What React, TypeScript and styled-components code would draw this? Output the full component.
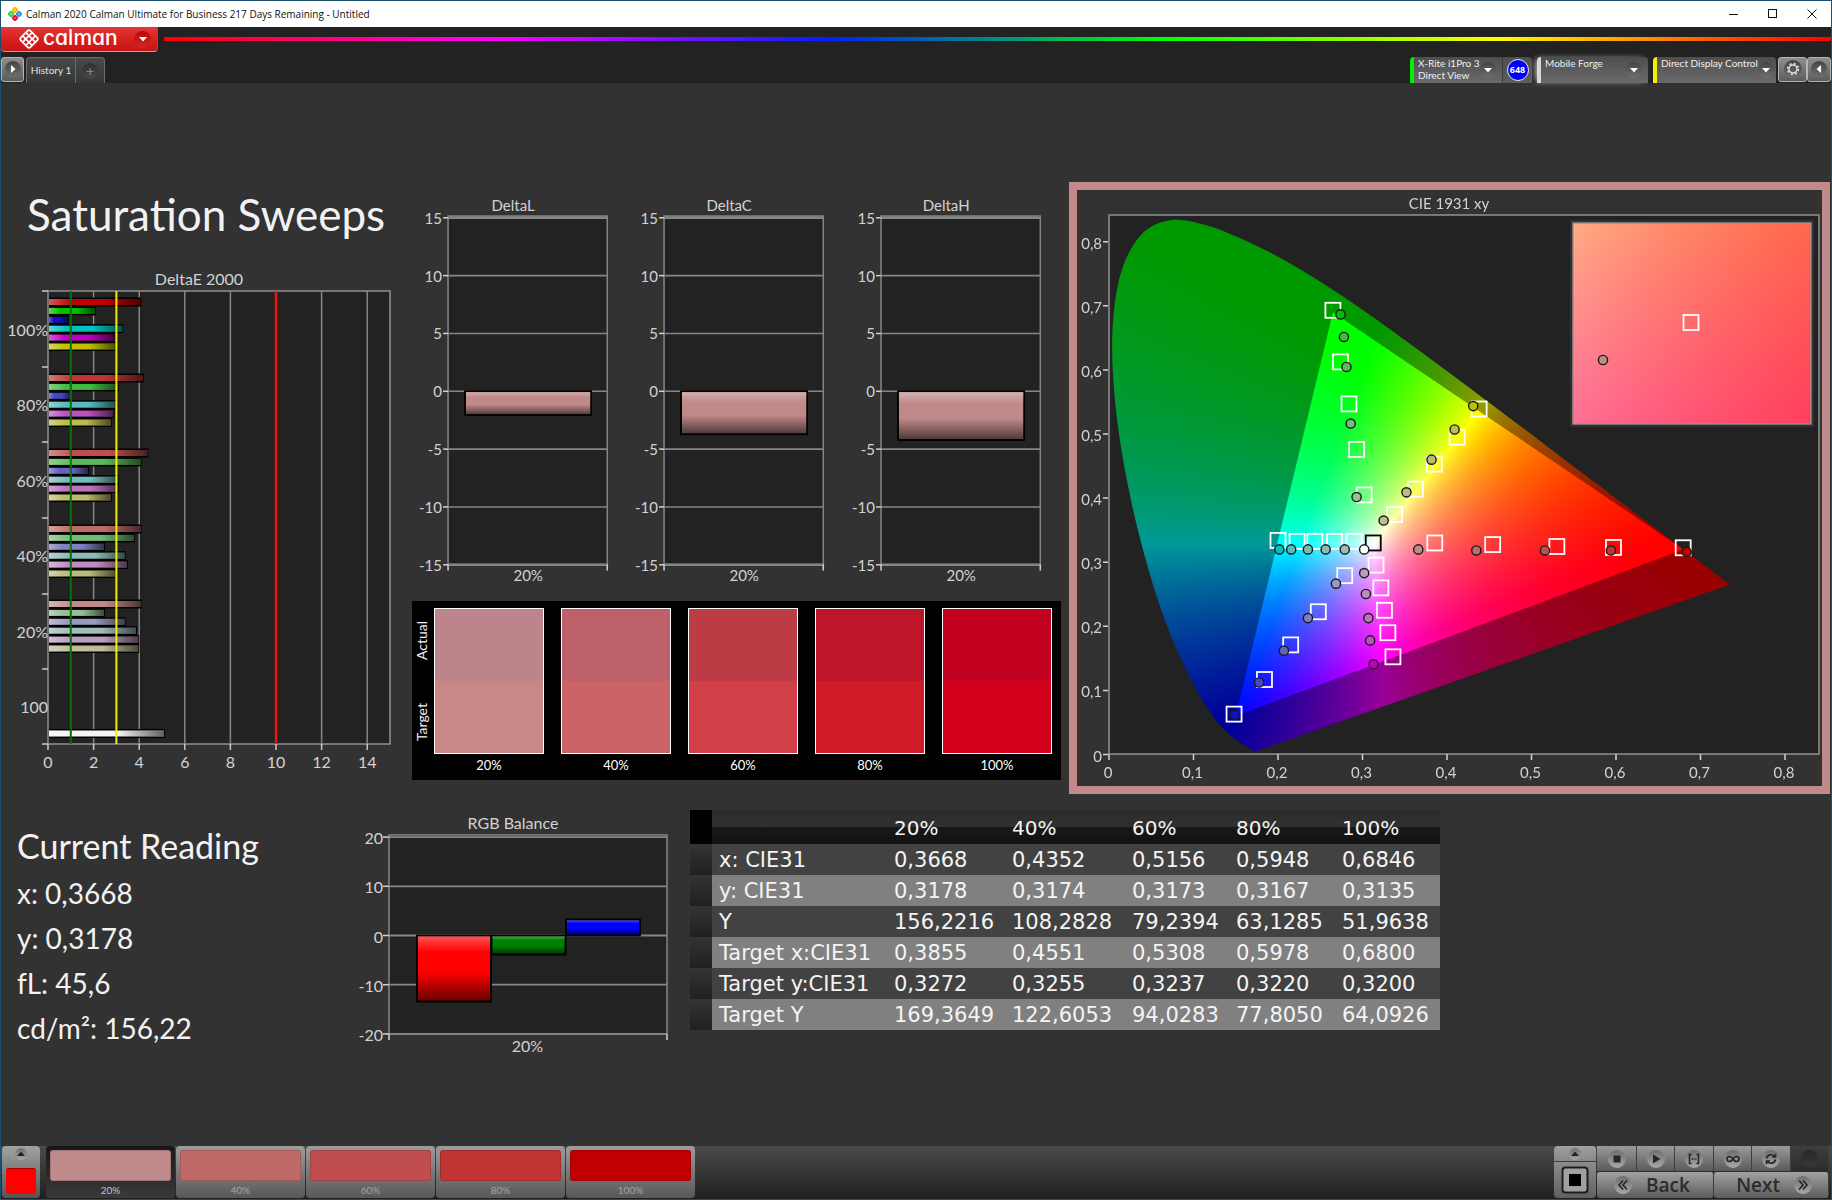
import React, { useEffect, useRef } from "react";
import styled, { createGlobalStyle, css } from "styled-components";

/* ------------------------------------------------------------------ */
/* Theme values                                                        */
/* ------------------------------------------------------------------ */

const sans = `Lato, "Open Sans", sans-serif`;
const ui = `"Open Sans", "Noto Sans", sans-serif`;
const wide = `"DejaVu Sans", sans-serif`;
const axis = "#d2d2d2";
const line = "#868686";
const plotFill = "#222222";

const GlobalStyle = createGlobalStyle`
  *, *::before, *::after { box-sizing: border-box; }
  body { margin: 0; background: #323232; font-family: ${sans}; color: #f2f2f2; }
  button { font: inherit; color: inherit; padding: 0; margin: 0; border: 0; cursor: pointer; }
  svg { display: block; }
`;

/* ------------------------------------------------------------------ */
/* Data                                                                */
/* ------------------------------------------------------------------ */

type Hue = "R" | "G" | "B" | "C" | "M" | "Y";
const hues: Hue[] = ["R", "G", "B", "C", "M", "Y"];

// Marker and bar colours per hue, from 20 % to 100 % saturation.
const shades: Record<Hue, string[]> = {
  R: ["#c08a8a", "#c06a68", "#c04e4e", "#c03434", "#c00000"],
  G: ["#96c096", "#74bc74", "#5aba5a", "#3ebc3e", "#00c000"],
  B: ["#9a9ac0", "#8080c0", "#6464c0", "#4646c0", "#1010c0"],
  C: ["#a0bcba", "#8cbcba", "#74bcbc", "#56bcbc", "#00c0c0"],
  M: ["#bc9cbc", "#c08cc0", "#c070c0", "#c050c0", "#c000c0"],
  Y: ["#bcbc96", "#bcbc80", "#bcbc6c", "#bcbc50", "#c0c000"],
};

const deltaE = [
  { label: "100%", shade: 4, top: 34, values: [4.1, 2.1, 0.9, 3.3, 2.9, 3.0] },
  { label: "80%", shade: 3, top: 110, values: [4.2, 3.1, 1.0, 3.0, 2.9, 2.8] },
  { label: "60%", shade: 2, top: 185, values: [4.4, 4.1, 1.8, 3.1, 3.1, 2.8] },
  { label: "40%", shade: 1, top: 261, values: [4.1, 3.8, 2.5, 3.4, 3.5, 3.0] },
  { label: "20%", shade: 0, top: 336, values: [4.1, 2.5, 3.4, 3.9, 4.0, 4.0] },
];

const deltas = [
  { title: "DeltaL", value: -2.1 },
  { title: "DeltaC", value: -3.8 },
  { title: "DeltaH", value: -4.3 },
];

const swatches = [
  { label: "20%", actual: "#bd848c", target: "#c98888" },
  { label: "40%", actual: "#be606a", target: "#cc6467" },
  { label: "60%", actual: "#bc3c46", target: "#d04046" },
  { label: "80%", actual: "#be1628", target: "#d01c28" },
  { label: "100%", actual: "#c20020", target: "#d2001a" },
];

const levels = ["20%", "40%", "60%", "80%", "100%"];

const rows: [string, string[]][] = [
  ["x: CIE31", ["0,3668", "0,4352", "0,5156", "0,5948", "0,6846"]],
  ["y: CIE31", ["0,3178", "0,3174", "0,3173", "0,3167", "0,3135"]],
  ["Y", ["156,2216", "108,2828", "79,2394", "63,1285", "51,9638"]],
  ["Target x:CIE31", ["0,3855", "0,4551", "0,5308", "0,5978", "0,6800"]],
  ["Target y:CIE31", ["0,3272", "0,3255", "0,3237", "0,3220", "0,3200"]],
  ["Target Y", ["169,3649", "122,6053", "94,0283", "77,8050", "64,0926"]],
];

type XY = [number, number];

const targets: XY[] = [
  [0.265, 0.693], [0.274, 0.6125], [0.284, 0.547], [0.293, 0.476], [0.302, 0.405],
  [0.438, 0.539], [0.412, 0.495], [0.385, 0.453], [0.3625, 0.414], [0.338, 0.3745],
  [0.3855, 0.33], [0.454, 0.3275], [0.53, 0.3245], [0.597, 0.323], [0.6795, 0.3225],
  [0.2, 0.334], [0.2226, 0.3325], [0.2436, 0.3325], [0.267, 0.3325], [0.29, 0.3325],
  [0.316, 0.2955], [0.3217, 0.26], [0.326, 0.225], [0.33, 0.19], [0.336, 0.1524],
  [0.279, 0.279], [0.2477, 0.2227], [0.215, 0.171], [0.184, 0.117], [0.148, 0.063],
];

// Measured points, 20 % to 100 % saturation.
const measured: Record<Hue, XY[]> = {
  R: [[0.366, 0.32], [0.4347, 0.3183], [0.516, 0.3183], [0.594, 0.3183], [0.6836, 0.316]],
  G: [[0.293, 0.4016], [0.286, 0.5163], [0.281, 0.6046], [0.278, 0.6514], [0.274, 0.6866]],
  B: [[0.2686, 0.2665], [0.2354, 0.2128], [0.207, 0.162], [0.1777, 0.1123], [0.149, 0.0617]],
  C: [[0.279, 0.32], [0.2564, 0.32], [0.2354, 0.32], [0.2156, 0.32], [0.2016, 0.32]],
  M: [[0.302, 0.283], [0.304, 0.2505], [0.307, 0.2128], [0.309, 0.178], [0.313, 0.1407]],
  Y: [[0.325, 0.365], [0.352, 0.409], [0.3817, 0.46], [0.409, 0.507], [0.431, 0.5435]],
};

// CIE 1931 spectral locus, 380 nm to 700 nm.
const locus: XY[] = [
  [0.1741, 0.005], [0.1738, 0.0049], [0.1733, 0.0048], [0.1726, 0.0048], [0.1714, 0.0051],
  [0.1689, 0.0069], [0.1644, 0.0109], [0.1566, 0.0177], [0.151, 0.0227], [0.144, 0.0297],
  [0.1355, 0.0399], [0.1241, 0.0578], [0.1096, 0.0868], [0.0913, 0.1327], [0.0687, 0.2007],
  [0.0454, 0.295], [0.0235, 0.4127], [0.0082, 0.5384], [0.0039, 0.6548], [0.0139, 0.7502],
  [0.0389, 0.812], [0.0743, 0.8338], [0.1142, 0.8262], [0.1547, 0.8059], [0.1929, 0.7816],
  [0.2296, 0.7543], [0.2658, 0.7243], [0.3016, 0.6923], [0.3373, 0.6589], [0.3731, 0.6245],
  [0.4087, 0.5896], [0.4441, 0.5547], [0.4788, 0.5202], [0.5125, 0.4866], [0.5448, 0.4544],
  [0.5752, 0.4242], [0.6029, 0.3965], [0.627, 0.3725], [0.6482, 0.3514], [0.6658, 0.334],
  [0.6801, 0.3197], [0.6915, 0.3083], [0.7079, 0.292], [0.719, 0.2809], [0.73, 0.27], [0.7347, 0.2653],
];
const gamut: XY[] = [[0.68, 0.32], [0.265, 0.69], [0.15, 0.06]];

/* ------------------------------------------------------------------ */
/* Window chrome                                                       */
/* ------------------------------------------------------------------ */

const Window = styled.div`
  min-height: 100vh;
  display: flex;
  flex-direction: column;
  border: 1px solid #1f4f6e;
  background: #323232;
`;

const TitleBar = styled.header`
  height: 26px;
  display: flex;
  align-items: center;
  gap: 4px;
  padding-left: 7px;
  background: #ffffff;
  color: #111111;
`;

const TitleText = styled.h1`
  flex: 1;
  margin: 0;
  font: 10px/16px ${ui};
`;

const WindowButtons = styled.div`
  display: flex;
`;

const WindowButton = styled.button`
  width: 39px;
  height: 26px;
  display: grid;
  place-items: center;
  background: none;
`;

const BrandRow = styled.div`
  height: 28px;
  display: flex;
  align-items: flex-start;
  gap: 6px;
  background: #222222;
`;

const BrandButton = styled.button`
  width: 157px;
  height: 25px;
  display: flex;
  align-items: center;
  padding: 0 6px 0 17px;
  gap: 3px;
  border-bottom: 1px solid #a8a8a8;
  border-right: 1px solid #b04040;
  border-radius: 0 0 4px 4px;
  background: linear-gradient(#e23838, #d82020 50%, #c81414);
`;

const BrandName = styled.span`
  flex: 1;
  text-align: left;
  font: 500 21px/22px Inter, sans-serif;
  font-feature-settings: "cv11";
  padding-bottom: 3px;
  color: #ffffff;
`;

const Knob = styled.span<{ $size?: number; $tone?: string }>`
  width: ${(p) => p.$size ?? 16}px;
  height: ${(p) => p.$size ?? 16}px;
  flex: none;
  display: grid;
  place-items: center;
  border-radius: 50%;
  background: ${(p) => p.$tone ?? "linear-gradient(#444444, #6e6e6e)"};
`;

const Rainbow = styled.div`
  flex: 1;
  height: 4px;
  margin-top: 10px;
  background: linear-gradient(90deg, #ff0000, #ff00ff 20%, #0020ff 40%, #00ff00 60%, #ffff00 80%, #ff0000);
`;

const TabRow = styled.nav`
  height: 28px;
  display: flex;
  align-items: flex-end;
  background: #222222;
`;

const EdgeButton = styled.button<{ $w: number }>`
  width: ${(p) => p.$w}px;
  height: 25px;
  align-self: center;
  display: grid;
  place-items: center;
  border: 1px solid #b4b4b4;
  border-radius: 3px;
  background: linear-gradient(#8e8e8e, #5c5c5c);
`;

const Tabs = styled.div`
  display: flex;
  flex: 1;
  margin-left: 2px;
`;

const tabSkin = css`
  height: 26px;
  border: 1px solid #6c6c6c;
  border-bottom: 0;
  background: linear-gradient(#4a4a4a, #363636);
`;

const Tab = styled.button`
  ${tabSkin}
  width: 50px;
  padding-bottom: 2px;
  border-radius: 4px 0 0 0;
  color: #e0e0e0;
  font: 10px/20px ${sans};
  white-space: nowrap;
`;

const AddTab = styled.button`
  ${tabSkin}
  width: 29px;
  display: grid;
  place-items: center;
  border-left: 0;
  border-radius: 0 4px 0 0;
  color: #8a8a8a;
  font: 14px/14px ${sans};
`;

const Devices = styled.div`
  display: flex;
  align-items: flex-end;
  gap: 5px;
  margin-right: 2px;
`;

const Device = styled.button<{ $w: number; $lamp: string; $glow?: boolean }>`
  width: ${(p) => p.$w}px;
  height: 26px;
  display: flex;
  align-items: flex-start;
  justify-content: space-between;
  padding: 0 6px 0 4px;
  border-left: 4px solid ${(p) => p.$lamp};
  border-radius: 4px 4px 0 0;
  background: linear-gradient(#4e4e4e, #6a6a6a);
  color: #f0f0f0;
  font: 10px/12px ${sans};
  text-align: left;
  white-space: pre;
  ${(p) => p.$glow && "box-shadow: -3px 0 6px -2px #cccccc;"}
  & > ${Knob} { align-self: center; }
`;

const DeviceGroup = styled.div`
  display: flex;
  & > ${Device} { padding-right: 9px; border-top-right-radius: 0; }
`;

const MeterSlot = styled.div`
  width: 30px;
  height: 26px;
  display: grid;
  place-items: center;
  border-left: 1px solid #3a3a3a;
  border-radius: 0 4px 0 0;
  background: linear-gradient(#4e4e4e, #5e5e5e);
`;

const MeterBadge = styled.span`
  width: 22px;
  height: 22px;
  border: 1px solid #e8e8e8;
  border-radius: 50%;
  background: #0000ff;
  color: #ffffff;
  font: bold 9px/20px ${ui};
  text-align: center;
`;

/* ------------------------------------------------------------------ */
/* Workspace                                                           */
/* ------------------------------------------------------------------ */

const Workspace = styled.main`
  flex: 1;
  padding: 99px 0 0;
`;

const UpperGrid = styled.div`
  display: grid;
  grid-template-columns: 411fr 649fr 769fr;
  padding-right: 1px;
  align-items: start;
`;

const LowerGrid = styled.div`
  display: grid;
  grid-template-columns: 354fr 335fr 1141fr;
  align-items: start;
  padding-top: 16px;
`;

const PageTitle = styled.h2`
  height: 86px;
  margin: 0;
  padding: 2px 0 0 26px;
  font: 44px/60px ${sans};
  white-space: nowrap;
`;

const Chart = styled.svg<{ $text?: number }>`
  width: 100%;
  height: auto;
  text { font-family: ${sans}; font-size: ${(p) => p.$text ?? 15}px; fill: ${axis}; }
`;

const Triple = styled.div`
  display: grid;
  grid-template-columns: repeat(3, 1fr);
  padding-top: 8px;
`;

const Comparison = styled.section`
  display: grid;
  grid-template-columns: 22px 1fr;
  padding: 7px 9px 4px 0;
  background: #000000;
`;

const SideLabels = styled.div`
  height: 146px;
  display: flex;
  flex-direction: column;
  justify-content: space-between;
  align-items: center;
  padding: 13px 2px 13px 0;
`;

const SideLabel = styled.span`
  writing-mode: vertical-rl;
  transform: rotate(180deg);
  font: 14px/18px ${sans};
`;

const SwatchRow = styled.div`
  display: grid;
  grid-template-columns: repeat(5, 1fr);
  gap: 17px;
`;

const SwatchCell = styled.figure`
  margin: 0;
  text-align: center;
  font: 13px/22px ${sans};
  color: #ffffff;
`;

const SwatchColor = styled.div<{ $top: string; $bottom: string }>`
  height: 146px;
  border: 1px solid #ffffff;
  background: linear-gradient(${(p) => p.$top} 50%, ${(p) => p.$bottom} 50%);
`;

const CiePanel = styled.section`
  margin-left: 8px;
  border: 8px solid #c08a8a;
  display: grid;
  background: #323232;
  & > * { grid-area: 1 / 1; }
`;

const CieCanvas = styled.canvas`
  width: 100%;
  height: auto;
`;

const Reading = styled.section`
  padding: 11px 0 0 16px;
  white-space: nowrap;
`;

const ReadingTitle = styled.h3`
  margin: 0;
  font: 34px/50px ${sans};
`;

const ReadingLine = styled.p`
  margin: 0;
  font: 28px/45px ${sans};
`;

/* ------------------------------------------------------------------ */
/* Data table                                                          */
/* ------------------------------------------------------------------ */

const Table = styled.table`
  width: 750px;
  border-collapse: collapse;
  table-layout: fixed;
  font: 21px/29px ${wide};
  color: #f4f4f4;
  white-space: nowrap;

  th, td { padding: 2px 0 0 7px; font-weight: normal; text-align: left; }
  thead tr { height: 34px; }
  tbody tr { height: 31px; background: #424242; }
  tbody tr:nth-child(even) { background: #808080; }
  thead th { background: linear-gradient(#2c2c2c, #303030 50%, #181818 50%, #121212); font-size: 20px; }
  thead th:first-child { background: #000000; }
  tbody td:first-child { background: linear-gradient(#343434, #202020); }
`;

/* ------------------------------------------------------------------ */
/* Footer                                                              */
/* ------------------------------------------------------------------ */

const Footer = styled.footer`
  height: 53px;
  display: flex;
  justify-content: space-between;
  padding: 0 2px 0 1px;
  background: linear-gradient(#4a4a4a, #202020);
`;

const FooterGroup = styled.div`
  display: flex;
  align-items: flex-start;
`;

const metal = "linear-gradient(#9a9a9a, #5a5a5a)";

const PatternToggle = styled.button`
  width: 38px;
  height: 52px;
  display: flex;
  flex-direction: column;
  align-items: center;
  justify-content: space-between;
  padding: 2px 4px 4px;
  margin-right: 6px;
  border-radius: 4px;
  background: linear-gradient(#a2a2a2, #555555);
`;

const PatternChip = styled.span`
  width: 30px;
  height: 26px;
  border-radius: 3px;
  border-top: 1px solid #a00000;
  background: #ff0000;
`;

const LevelButton = styled.button<{ $active?: boolean }>`
  width: 129px;
  height: 52px;
  margin-right: 1px;
  padding: 4px 4px 0;
  border-radius: 4px;
  background: ${(p) => (p.$active ? "linear-gradient(#181818, #3a3a3a)" : "linear-gradient(#9c9c9c, #585858)")};
  color: ${(p) => (p.$active ? "#c4c4c4" : "#a4a4a4")};
  font: 10px/18px ${sans};
`;

const LevelChip = styled.span<{ $color: string }>`
  height: 31px;
  display: block;
  border-radius: 3px;
  border: 1px solid rgba(0, 0, 0, 0.15);
  background: ${(p) => p.$color};
`;

const StopBlock = styled.div`
  width: 42px;
  height: 52px;
  display: flex;
  flex-direction: column;
  margin-right: 1px;
`;

const StopTop = styled.button`
  height: 16px;
  display: grid;
  place-items: center;
  border-radius: 4px 4px 0 0;
  border-bottom: 1px solid #3c3c3c;
  background: linear-gradient(#a0a0a0, #888888);
`;

const StopMain = styled.button`
  flex: 1;
  display: grid;
  place-items: center;
  border-radius: 0 0 4px 4px;
  background: linear-gradient(#8c8c8c, #606060);
`;

const Transport = styled.div`
  display: grid;
  grid-template-columns: 40px 38px 39px 38px 39px 38px;
  grid-template-rows: 26px 26px;
`;

const TransportButton = styled.button<{ $off?: boolean }>`
  display: grid;
  place-items: center;
  border-right: 1px solid #3e3e3e;
  border-bottom: 1px solid #2c2c2c;
  background: ${(p) => (p.$off ? "linear-gradient(#3e3e3e, #2c2c2c)" : metal)};
`;

const StepButton = styled.button<{ $next?: boolean }>`
  grid-column: span 3;
  display: flex;
  align-items: center;
  justify-content: ${(p) => (p.$next ? "flex-end" : "flex-start")};
  gap: 14px;
  padding: 0 16px 0 17px;
  border-right: 1px solid #3e3e3e;
  border-radius: 3px;
  background: linear-gradient(#a2a2a2, #5c5c5c);
  color: #2c2c2c;
  font: 600 19px/24px ${ui};
`;

const lightKnob = "linear-gradient(#6e6e6e, #a8a8a8)";

/* ------------------------------------------------------------------ */
/* Drawings                                                            */
/* ------------------------------------------------------------------ */

const AppIcon = () => (
  <svg width="14" height="14" viewBox="0 0 14 14" aria-hidden="true">
    <g transform="rotate(45 7 7)" strokeWidth="1.7">
      <rect x="2.3" y="2.3" width="3.7" height="3.7" rx="1" stroke="#f5b800" fill="#ffe14a" />
      <rect x="8" y="2.3" width="3.7" height="3.7" rx="1" stroke="#2f8fe8" fill="#7cc4ff" />
      <rect x="2.3" y="8" width="3.7" height="3.7" rx="1" stroke="#2ed03c" fill="#9cf29c" />
      <rect x="8" y="8" width="3.7" height="3.7" rx="1" stroke="#e8103c" fill="#ff5a7c" />
    </g>
  </svg>
);

const BrandMark = () => (
  <svg width="22" height="22" viewBox="0 0 22 22" aria-hidden="true">
    <g transform="rotate(45 11 11)" fill="none" stroke="#fff">
      <rect x="4.2" y="4.2" width="13.6" height="13.6" rx="2" strokeWidth="1.8" />
      <path d="M8.7 4v14M13.3 4v14M4 8.7h14M4 13.3h14" strokeWidth="1.7" />
    </g>
  </svg>
);

const Arrow = ({ dir = "down", color = "#fff" }: { dir?: "down" | "up" | "left" | "right"; color?: string }) => {
  const d = {
    down: "M1 3h8l-4 4.5z",
    up: "M1 7h8l-4-4.5z",
    left: "M7 1v8L2.5 5z",
    right: "M3 1v8l4.5-4z",
  }[dir];
  return (
    <svg width="10" height="10" viewBox="0 0 10 10" aria-hidden="true">
      <path d={d} fill={color} />
    </svg>
  );
};

const Glyph = ({ d, fill }: { d: string; fill?: boolean }) => (
  <svg width="14" height="14" viewBox="0 0 14 14" aria-hidden="true">
    <path d={d} fill={fill ? "#262626" : "none"} stroke={fill ? "none" : "#262626"} strokeWidth="1.6" />
  </svg>
);

const GearIcon = () => (
  <svg width="14" height="14" viewBox="0 0 14 14" aria-hidden="true" fill="none" stroke="#e6e6e6">
    <circle cx="7" cy="7" r="4" strokeWidth="1.4" />
    <circle cx="7" cy="7" r="5.4" strokeWidth="1.6" strokeDasharray="2 2.24" />
  </svg>
);

function DeltaEChart() {
  const X = (v: number) => 47 + 22.8 * v;
  return (
    <Chart $text={16} viewBox="0 0 411 512" role="img" aria-label="DeltaE 2000">
      <defs>
        <linearGradient id="barH">
          <stop offset="0" stopColor="#fff" stopOpacity="0.35" />
          <stop offset="0.25" stopColor="#fff" stopOpacity="0" />
          <stop offset="0.6" stopColor="#000" stopOpacity="0" />
          <stop offset="1" stopColor="#000" stopOpacity="0.6" />
        </linearGradient>
      </defs>
      <text x="198" y="17" textAnchor="middle">DeltaE 2000</text>
      <rect x="47" y="23" width="342" height="453" fill={plotFill} />
      {[2, 4, 6, 8, 10, 12, 14].map((v) => (
        <path key={v} d={`M${X(v)} 23V476`} stroke={line} strokeWidth="1.5" />
      ))}
      {deltaE.map((g) =>
        g.values.map((v, i) => {
          const y = g.top - 4.5 + i * 8.9;
          const w = X(v) - 47;
          return (
            <g key={g.label + i}>
              <rect x="47" y={y} width={w} height="9" fill="#000" />
              <rect x="48" y={y + 1.5} width={w - 2} height="6" fill={shades[hues[i]][g.shade]} />
              <rect x="48" y={y + 1.5} width={w - 2} height="6" fill="url(#barH)" />
            </g>
          );
        })
      )}
      <rect x="47" y="461" width="117" height="9" fill="#000" />
      <rect x="48" y="462.5" width="115" height="6" fill="#f4f4f4" />
      <rect x="48" y="462.5" width="115" height="6" fill="url(#barH)" />
      <rect x="47" y="23" width="342" height="453" fill="none" stroke="#909090" strokeWidth="1.5" />
      <path d={`M${X(1)} 23V476`} stroke="#0a6e0a" strokeWidth="2" />
      <path d={`M${X(3)} 23V476`} stroke="#f0f000" strokeWidth="2" />
      <path d={`M${X(10)} 23V476`} stroke="#f81010" strokeWidth="2.4" />
      {[23, 99, 174, 250, 326, 401, 476].map((y) => (
        <path key={y} d={`M41 ${y}H47`} stroke="#c8c8c8" strokeWidth="1.5" />
      ))}
      {[0, 2, 4, 6, 8, 10, 12, 14].map((v) => (
        <g key={v}>
          <path d={`M${X(v)} 476V482`} stroke="#c8c8c8" strokeWidth="1.5" />
          <text x={X(v)} y="500" textAnchor="middle">{v}</text>
        </g>
      ))}
      {["100%", "80%", "60%", "40%", "20%", "100"].map((t, i) => (
        <text key={t} x="47" y={68 + i * 75.4} textAnchor="end">{t}</text>
      ))}
    </Chart>
  );
}

const BarShade = () => (
  <defs>
    <linearGradient id="barV" x1="0" y1="0" x2="0" y2="1">
      <stop offset="0" stopColor="#fff" stopOpacity="0.35" />
      <stop offset="0.25" stopColor="#fff" stopOpacity="0" />
      <stop offset="0.55" stopColor="#000" stopOpacity="0" />
      <stop offset="1" stopColor="#000" stopOpacity="0.6" />
    </linearGradient>
  </defs>
);

const Bar = ({ x, y, w, h, color }: { x: number; y: number; w: number; h: number; color: string }) => (
  <g stroke="#000" strokeWidth="1.5">
    <rect x={x} y={y} width={w} height={h} fill={color} />
    <rect x={x} y={y} width={w} height={h} fill="url(#barV)" />
  </g>
);

function DeltaChart({ title, value }: { title: string; value: number }) {
  const Y = (v: number) => 201 - 11.55 * v;
  return (
    <Chart viewBox="0 0 216 410" role="img" aria-label={title}>
      <BarShade />
      <text x="101" y="21" textAnchor="middle">{title}</text>
      <rect x="36" y="26" width="159" height="348" fill={plotFill} stroke={line} strokeWidth="1.5" />
      {[15, 10, 5, 0, -5, -10, -15].map((v) => (
        <g key={v}>
          <path d={`M36 ${Y(v)}H195`} stroke={line} strokeWidth={Math.abs(v) === 15 ? 2.4 : 1.6} />
          <path d={`M31 ${Y(v)}H36`} stroke={axis} strokeWidth="1.5" />
          <text x="30" y={Y(v) + 6} textAnchor="end">{v}</text>
        </g>
      ))}
      <path d="M36 374V380M195 374V380" stroke={axis} strokeWidth="1.5" />
      <Bar x={53} y={201} w={126} h={-11.3 * value} color="#c08a8a" />
      <text x="116" y="390" textAnchor="middle">20%</text>
    </Chart>
  );
}

function RgbChart() {
  const Y = (v: number) => 125.5 - 4.92 * v;
  return (
    <Chart $text={16} viewBox="0 0 335 255" role="img" aria-label="RGB Balance">
      <BarShade />
      <text x="158" y="19" textAnchor="middle">RGB Balance</text>
      <rect x="34" y="25" width="278" height="199" fill={plotFill} stroke={line} strokeWidth="1.5" />
      {[20, 10, 0, -10, -20].map((v) => (
        <g key={v}>
          <path d={`M34 ${Y(v)}H312`} stroke={line} strokeWidth="1.8" />
          <path d={`M28 ${Y(v)}H34`} stroke={axis} strokeWidth="1.5" />
          <text x="28" y={Y(v) + 7} textAnchor="end">{v}</text>
        </g>
      ))}
      <path d="M34 224V230M312 224V230" stroke={axis} strokeWidth="1.5" />
      <Bar x={62} y={125.5} w={74} h={66} color="#ff0000" />
      <Bar x={136.5} y={125.5} w={74} h={19} color="#008000" />
      <Bar x={211} y={109.5} w={74} h={16} color="#0000ff" />
      <text x="172.5" y="242" textAnchor="middle">20%</text>
    </Chart>
  );
}

/* CIE diagram geometry, in panel units. */
const CW = 745;
const CH = 596;
const cx = (x: number) => 32 + 845 * x;
const cy = (y: number) => 564.5 - 641 * y;
const inset = { x: 496, y: 33, w: 238, h: 201, tx: 0.3855, ty: 0.3275, span: 0.0253 };

// Linear sRGB of a chromaticity, scaled so that its largest channel is 1.
function rgbOf(x: number, y: number): [number, number, number] {
  const X = x / y;
  const Z = (1 - x - y) / y;
  const r = Math.max(0, 3.2406 * X - 1.5372 - 0.4986 * Z);
  const g = Math.max(0, -0.9689 * X + 1.8758 + 0.0415 * Z);
  const b = Math.max(0, 0.0557 * X - 0.204 + 1.057 * Z);
  const m = Math.max(r, g, b, 1e-6);
  return [(255 * r) / m, (255 * g) / m, (255 * b) / m];
}

function tracePolygon(ctx: CanvasRenderingContext2D, pts: XY[]) {
  ctx.beginPath();
  pts.forEach(([x, y], i) => (i ? ctx.lineTo(cx(x), cy(y)) : ctx.moveTo(cx(x), cy(y))));
  ctx.closePath();
}

// Catmull-Rom curve through every sample of the locus.
function traceLocus(ctx: CanvasRenderingContext2D) {
  const p = locus.map(([x, y]) => [cx(x), cy(y)]);
  const at = (i: number) => p[Math.min(p.length - 1, Math.max(0, i))];
  ctx.beginPath();
  ctx.moveTo(p[0][0], p[0][1]);
  for (let i = 0; i < p.length - 1; i++) {
    const [a, b, c, d] = [at(i - 1), at(i), at(i + 1), at(i + 2)];
    ctx.bezierCurveTo(
      b[0] + (c[0] - a[0]) / 6, b[1] + (c[1] - a[1]) / 6,
      c[0] - (d[0] - b[0]) / 6, c[1] - (d[1] - b[1]) / 6,
      c[0], c[1]
    );
  }
  ctx.closePath();
}

function paintDiagram(canvas: HTMLCanvasElement) {
  const ctx = canvas.getContext("2d");
  if (!ctx) return;
  const layer = (shade: number, at: (px: number, py: number) => XY) => {
    const c = document.createElement("canvas");
    c.width = CW;
    c.height = CH;
    const k = c.getContext("2d")!;
    const img = k.createImageData(CW, CH);
    for (let py = 0; py < CH; py++)
      for (let px = 0; px < CW; px++) {
        const [x, y] = at(px, py);
        const [r, g, b] = rgbOf(x, Math.max(y, 0.001));
        img.data.set([r * shade, g * shade, b * shade, 255], (py * CW + px) * 4);
      }
    k.putImageData(img, 0, 0);
    return c;
  };
  const chart = (px: number, py: number): XY => [(px - 32) / 845, (564.5 - py) / 641];
  const clipTo = (draw: () => void, image: HTMLCanvasElement) => {
    ctx.save();
    draw();
    ctx.clip();
    ctx.drawImage(image, 0, 0);
    ctx.restore();
  };
  ctx.fillStyle = "#323232";
  ctx.fillRect(0, 0, CW, CH);
  ctx.fillStyle = plotFill;
  ctx.fillRect(32, 25, 710, 539);
  clipTo(() => traceLocus(ctx), layer(0.6, chart));
  clipTo(() => tracePolygon(ctx, gamut), layer(1, chart));
  clipTo(
    () => {
      ctx.beginPath();
      ctx.rect(inset.x, inset.y, inset.w, inset.h);
    },
    layer(1, (px, py) => [
      inset.tx + ((px - inset.x) / inset.w - 0.5) * 2 * inset.span,
      inset.ty - ((py - inset.y) / inset.h - 0.5) * 2 * inset.span,
    ])
  );
}

const Target = ({ x, y, color = "#fff" }: { x: number; y: number; color?: string }) => (
  <rect x={x - 7.5} y={y - 7.5} width="15" height="15" fill="none" stroke={color} strokeWidth="1.8" />
);

const Sample = ({ x, y, fill }: { x: number; y: number; fill: string }) => (
  <circle cx={x} cy={y} r="4.6" fill={fill} stroke="#1a1a1a" strokeWidth="1.4" />
);

function CieDiagram() {
  const ref = useRef<HTMLCanvasElement>(null);
  useEffect(() => {
    if (ref.current) paintDiagram(ref.current);
  }, []);
  const ticks = [0, 1, 2, 3, 4, 5, 6, 7, 8];
  const name = (t: number) => (t ? `0,${t}` : "0");
  return (
    <CiePanel aria-label="CIE 1931 xy">
      <CieCanvas ref={ref} width={CW} height={CH} />
      <Chart viewBox={`0 0 ${CW} ${CH}`}>
        <text x="372" y="19" textAnchor="middle">CIE 1931 xy</text>
        <rect x="32" y="25" width="710" height="539" fill="none" stroke="#8c8c8c" strokeWidth="1.6" />
        {ticks.map((t) => (
          <g key={t}>
            <path d={`M${cx(t / 10)} 564V570M26 ${cy(t / 10)}H31`} stroke={axis} strokeWidth="1.5" />
            <text x={cx(t / 10) - 1} y="588" textAnchor="middle">{name(t)}</text>
            <text x="25" y={cy(t / 10) + 7} textAnchor="end">{name(t)}</text>
          </g>
        ))}
        {targets.map(([x, y], i) => (
          <Target key={i} x={cx(x)} y={cy(y)} />
        ))}
        <Target x={cx(0.3127)} y={cy(0.33)} color="#000" />
        {hues.map((h) =>
          measured[h].map(([x, y], i) => <Sample key={h + i} x={cx(x)} y={cy(y)} fill={shades[h][i]} />)
        )}
        <Sample x={cx(0.302)} y={cy(0.32)} fill="#fff" />
        <rect x={inset.x - 2} y={inset.y - 2} width={inset.w + 4} height={inset.h + 4} fill="none" stroke="#303030" strokeWidth="2" />
        <rect x={inset.x} y={inset.y} width={inset.w} height={inset.h} fill="none" stroke="#a09090" strokeWidth="1.4" />
        <Target x={614} y={132.5} />
        <Sample x={526} y={170} fill={shades.R[0]} />
      </Chart>
    </CiePanel>
  );
}

/* ------------------------------------------------------------------ */
/* App                                                                 */
/* ------------------------------------------------------------------ */

export default function App() {
  return (
    <>
      <GlobalStyle />
      <Window>
        <TitleBar>
          <AppIcon />
          <TitleText>Calman 2020 Calman Ultimate for Business 217 Days Remaining - Untitled</TitleText>
          <WindowButtons>
            <WindowButton aria-label="Minimize">
              <svg width="10" height="10" viewBox="0 0 10 10"><path d="M0 5.5h9" stroke="#111" /></svg>
            </WindowButton>
            <WindowButton aria-label="Maximize">
              <svg width="10" height="10" viewBox="0 0 10 10"><rect x="0.5" y="0.5" width="8" height="8" fill="none" stroke="#111" /></svg>
            </WindowButton>
            <WindowButton aria-label="Close">
              <svg width="10" height="10" viewBox="0 0 10 10"><path d="M0.5 0.5l9 9M9.5 0.5l-9 9" stroke="#111" /></svg>
            </WindowButton>
          </WindowButtons>
        </TitleBar>

        <BrandRow>
          <BrandButton aria-label="calman menu">
            <BrandMark />
            <BrandName>calman</BrandName>
            <Knob $size={17} $tone="linear-gradient(#b80808, #d42424)"><Arrow /></Knob>
          </BrandButton>
          <Rainbow />
        </BrandRow>

        <TabRow>
          <EdgeButton $w={23} aria-label="Show panel">
            <Knob><Arrow dir="right" /></Knob>
          </EdgeButton>
          <Tabs>
            <Tab>History 1</Tab>
            <AddTab aria-label="Add tab"><Knob $tone="linear-gradient(#303030, #484848)">+</Knob></AddTab>
          </Tabs>
          <Devices>
            <DeviceGroup>
              <Device $w={92} $lamp="#00f000">
                {"X-Rite i1Pro 3\nDirect View"}
                <Knob><Arrow /></Knob>
              </Device>
              <MeterSlot><MeterBadge>648</MeterBadge></MeterSlot>
            </DeviceGroup>
            <Device $w={111} $lamp="#d8d8d8" $glow>
              Mobile Forge
              <Knob><Arrow /></Knob>
            </Device>
            <Device $w={123} $lamp="#f0f000">
              Direct Display Control
              <Knob><Arrow /></Knob>
            </Device>
          </Devices>
          <EdgeButton $w={29} aria-label="Settings"><Knob $size={18}><GearIcon /></Knob></EdgeButton>
          <EdgeButton $w={24} aria-label="Hide panel"><Knob><Arrow dir="left" /></Knob></EdgeButton>
        </TabRow>

        <Workspace>
          <UpperGrid>
            <div>
              <PageTitle>Saturation Sweeps</PageTitle>
              <DeltaEChart />
            </div>
            <div>
              <Triple>
                {deltas.map((d) => (
                  <DeltaChart key={d.title} {...d} />
                ))}
              </Triple>
              <Comparison>
                <SideLabels>
                  <SideLabel>Actual</SideLabel>
                  <SideLabel>Target</SideLabel>
                </SideLabels>
                <SwatchRow>
                  {swatches.map((s) => (
                    <SwatchCell key={s.label}>
                      <SwatchColor $top={s.actual} $bottom={s.target} />
                      <figcaption>{s.label}</figcaption>
                    </SwatchCell>
                  ))}
                </SwatchRow>
              </Comparison>
            </div>
            <CieDiagram />
          </UpperGrid>

          <LowerGrid>
            <Reading>
              <ReadingTitle>Current Reading</ReadingTitle>
              <ReadingLine>x: 0,3668</ReadingLine>
              <ReadingLine>y: 0,3178</ReadingLine>
              <ReadingLine>fL: 45,6</ReadingLine>
              <ReadingLine>cd/m²: 156,22</ReadingLine>
            </Reading>
            <RgbChart />
            <Table>
              <colgroup>
                <col width="22" />
                <col width="175" />
                <col width="118" />
                <col width="120" />
                <col width="104" />
                <col width="106" />
                <col width="105" />
              </colgroup>
              <thead>
                <tr>
                  <th />
                  <th />
                  {levels.map((l) => (
                    <th key={l} scope="col">{l}</th>
                  ))}
                </tr>
              </thead>
              <tbody>
                {rows.map(([label, values]) => (
                  <tr key={label}>
                    <td />
                    <th scope="row">{label}</th>
                    {values.map((v) => (
                      <td key={v}>{v}</td>
                    ))}
                  </tr>
                ))}
              </tbody>
            </Table>
          </LowerGrid>
        </Workspace>

        <Footer>
          <FooterGroup>
            <PatternToggle aria-label="Pattern colour">
              <Knob $size={12} $tone={lightKnob}><Arrow dir="up" color="#222" /></Knob>
              <PatternChip />
            </PatternToggle>
            {levels.map((l, i) => (
              <LevelButton key={l} $active={i === 0}>
                <LevelChip $color={shades.R[i]} />
                {l}
              </LevelButton>
            ))}
          </FooterGroup>
          <FooterGroup>
            <StopBlock>
              <StopTop aria-label="Expand"><Knob $size={12} $tone={lightKnob}><Arrow dir="up" color="#222" /></Knob></StopTop>
              <StopMain aria-label="Stop window">
                <svg width="28" height="28" viewBox="0 0 28 28">
                  <rect x="1.5" y="1.5" width="25" height="25" rx="3" fill="#a0a0a0" stroke="#1c1c1c" strokeWidth="2" />
                  <rect x="8" y="8" width="12" height="12" fill="#000" />
                </svg>
              </StopMain>
            </StopBlock>
            <Transport>
              <TransportButton aria-label="Stop"><Knob $size={18} $tone={lightKnob}><Glyph fill d="M3.5 3.5h7v7h-7z" /></Knob></TransportButton>
              <TransportButton aria-label="Play"><Knob $size={18} $tone={lightKnob}><Glyph fill d="M4 2.5v9l7.5-4.5z" /></Knob></TransportButton>
              <TransportButton aria-label="Read range"><Knob $size={18} $tone={lightKnob}><Glyph d="M4.5 2.5H2.5v9h2M9.5 2.5h2v9h-2M4.5 7h1.2M6.4 7h1.2M8.3 7h1.2" /></Knob></TransportButton>
              <TransportButton aria-label="Continuous"><Knob $size={18} $tone={lightKnob}><Glyph d="M7 7C5.5 4.5 4.5 4.5 3.5 4.5a2.5 2.5 0 0 0 0 5C4.5 9.5 5.5 9.5 7 7s2.5-2.5 3.5-2.5a2.5 2.5 0 0 1 0 5C9.5 9.5 8.5 9.5 7 7z" /></Knob></TransportButton>
              <TransportButton aria-label="Refresh"><Knob $size={18} $tone={lightKnob}><Glyph d="M2.5 6.5a4.5 4.5 0 0 1 8-2M11.5 7.5a4.5 4.5 0 0 1-8 2M11.5 1.8v3.2H8.2M2.5 12.2V9h3.3" /></Knob></TransportButton>
              <TransportButton $off aria-label="Record"><Knob $size={17} $tone="linear-gradient(#262626, #383838)" /></TransportButton>
              <StepButton>
                <Knob $size={18} $tone={lightKnob}><Glyph d="M7 2.5L3 7l4 4.5M11 2.5L7 7l4 4.5" /></Knob>
                Back
              </StepButton>
              <StepButton $next>
                Next
                <Knob $size={18} $tone={lightKnob}><Glyph d="M3 2.5L7 7l-4 4.5M7 2.5L11 7l-4 4.5" /></Knob>
              </StepButton>
            </Transport>
          </FooterGroup>
        </Footer>
      </Window>
    </>
  );
}
